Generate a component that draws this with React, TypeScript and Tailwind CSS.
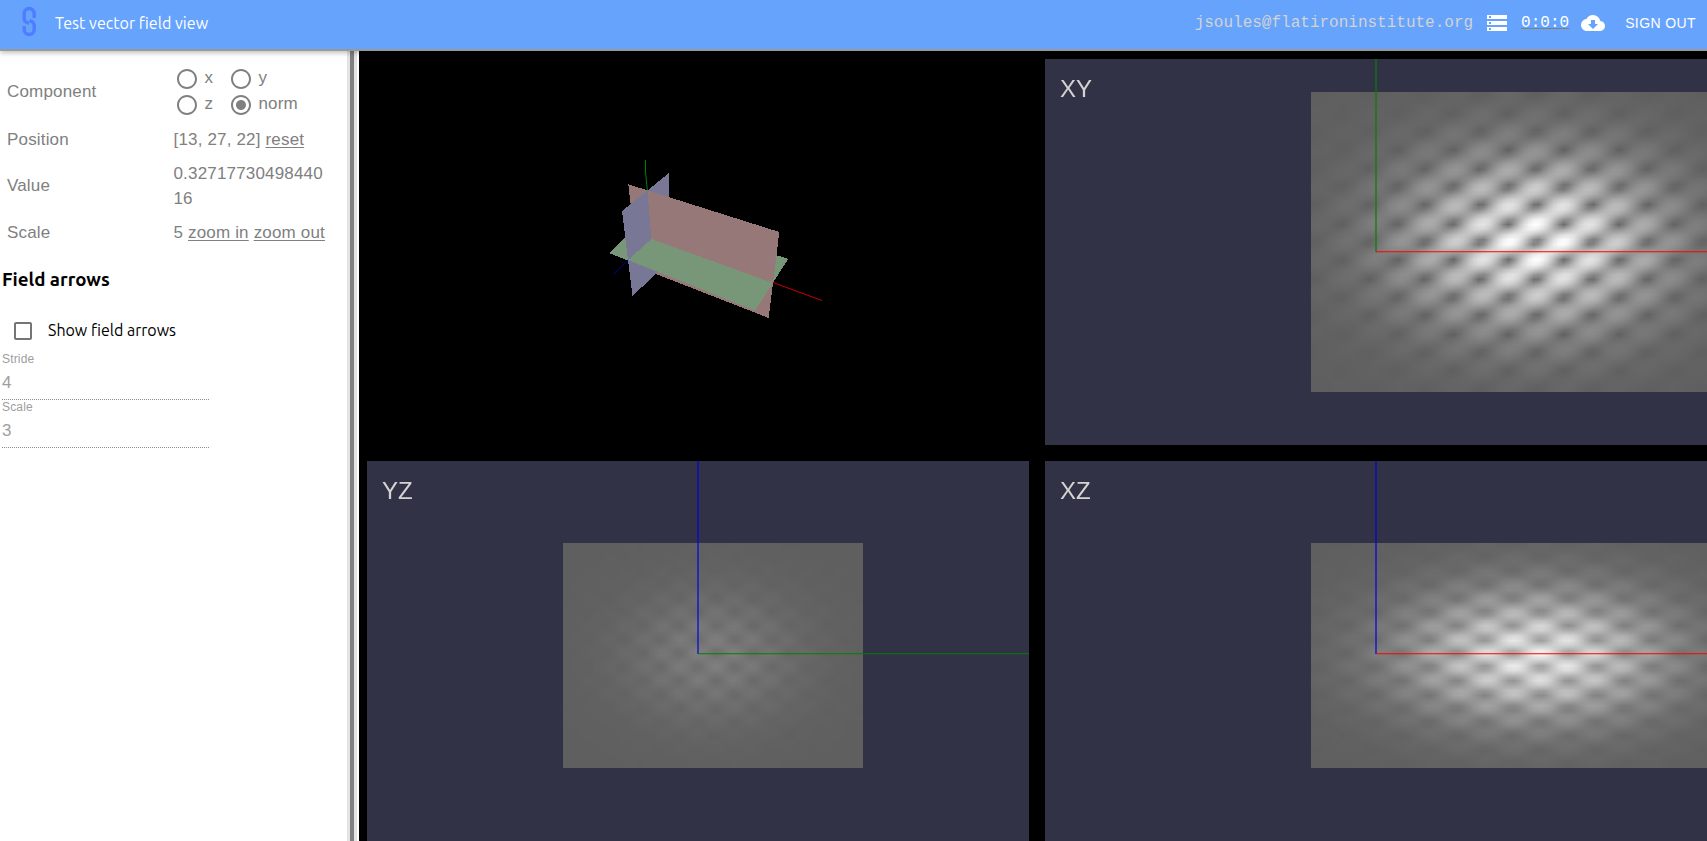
import React, { useLayoutEffect, useRef } from "react";
import { MdStorage, MdCloudDownload, MdRadioButtonUnchecked, MdRadioButtonChecked, MdCheckBoxOutlineBlank } from "react-icons/md";

type Axis = 0 | 1 | 2;
const SHAPE = [90, 60, 45];
const POSITION = [13, 27, 22];

function fieldNorm(p: number[]): number {
  const [x, y, z] = p.map((v, i) => (2 * v) / (SHAPE[i] - 1) - 1);
  const k = 4 * Math.PI;
  const g = Math.exp(-3 * (x * x + y * y + z * z));
  return g * Math.hypot(Math.sin(k * (x - y + z)), Math.sin(k * (x - y - z)), Math.sin(k * (x + y - z)));
}

function SliceImage({ h, v, className }: { h: Axis; v: Axis; className: string }) {
  const ref = useRef<HTMLCanvasElement>(null);
  useLayoutEffect(() => {
    const ctx = ref.current?.getContext("2d");
    if (!ctx) return;
    const [w, n] = [SHAPE[h], SHAPE[v]];
    const img = ctx.createImageData(w, n);
    for (let j = 0; j < n; j++) {
      for (let i = 0; i < w; i++) {
        const p = [...POSITION];
        p[h] = i;
        p[v] = n - 1 - j;
        const c = Math.min(255, 95 + 97 * fieldNorm(p));
        const o = (j * w + i) * 4;
        img.data[o] = c;
        img.data[o + 1] = c;
        img.data[o + 2] = c;
        img.data[o + 3] = 255;
      }
    }
    ctx.putImageData(img, 0, 0);
  }, [h, v]);
  return <canvas ref={ref} width={SHAPE[h]} height={SHAPE[v]} className={className} />;
}

const AXIS_COLORS = ["rgba(255,0,0,0.75)", "rgba(0,128,0,0.75)", "rgba(0,0,205,0.7)"];

function SlicePanel({ label, h, v, imageClass }: { label: string; h: Axis; v: Axis; imageClass: string }) {
  return (
    <div className="relative m-2 h-[386px] w-[662px] overflow-hidden bg-[#323246]">
      <SliceImage h={h} v={v} className={imageClass} />
      <svg className="absolute inset-0" width="662" height="386" shapeRendering="crispEdges">
        <rect x="330" y="0" width="2" height="193" fill={v === 1 ? "rgba(0,128,0,0.6)" : "rgba(0,0,220,0.6)"} />
        <rect x="331" y="192" width="331" height="1" fill={AXIS_COLORS[h]} />
        <rect x="331" y="193" width="331" height="1" fill={AXIS_COLORS[h]} opacity="0.3" />
      </svg>
      <div className="relative px-[15px] pt-[15px] text-[24px] leading-[30px] text-[#d3d3d3]">{label}</div>
    </div>
  );
}

function PlanesView() {
  return (
    <div className="h-[402px] w-[678px] overflow-hidden bg-black">
      <svg width="678" height="402" viewBox="359 51 678 402">
        <g shapeRendering="crispEdges">
          <polygon points="609,253 650,214 788.2,259 755,310.5" fill="#789678" />
          <polygon points="628.3,184.3 779.3,232 768.7,318 638,267" fill="#967878" />
          <polygon points="622,211 669,173 670.5,260 632.5,296" fill="#787896" />
          <polygon points="647.5,190.5 779.3,232 773,283 651.3,239" fill="#967878" />
          <polygon points="651.3,239 773,283 755,310.5 628,260" fill="#789678" />
        </g>
        <path d="M645.5 160v12l1.8 18" stroke="#008000" fill="none" />
        <path d="M628 260.5l-15 14" stroke="#0000a0" fill="none" />
        <path d="M773 282.500l49 18" stroke="#b00000" strokeWidth="1.3" fill="none" />
      </svg>
    </div>
  );
}

function Radio({ label, checked }: { label: string; checked?: boolean }) {
  return (
    <label className="flex h-[26px] items-center">
      {checked ? <MdRadioButtonChecked size={24} className="mt-px" /> : <MdRadioButtonUnchecked size={24} className="mt-px" />}
      <span className="-mt-[2px] ml-[6px]">{label}</span>
    </label>
  );
}

function Row({ label, className, children }: { label: string; className: string; children: React.ReactNode }) {
  return (
    <div className={"flex items-center " + className}>
      <div className="w-[166.5px] shrink-0">{label}</div>
      <div className="w-[152px] whitespace-nowrap">{children}</div>
    </div>
  );
}

function Field({ label, value }: { label: string; value: string }) {
  return (
    <div className="h-12 w-[207px] tracking-[0.16px] text-[#9e9e9e]">
      <div className="h-[17px] text-[12px] leading-[17px]">{label}</div>
      <div className="h-[32px] border-b border-dotted border-[#8c8c8c] text-[17px] leading-[29px]">{value}</div>
    </div>
  );
}

function Sidebar() {
  return (
    <aside className="h-full w-[347px] shrink-0 overflow-hidden bg-white">
      <div className="pl-[7px] pt-[14px] text-[17px] leading-[25px] tracking-[0.17px] text-[#808080]">
        <Row label="Component" className="h-[53px]">
          <div className="grid grid-cols-[54px_1fr] pl-[1px]">
            <Radio label="x" />
            <Radio label="y" />
            <Radio label="z" />
            <Radio label="norm" checked />
          </div>
        </Row>
        <Row label="Position" className="h-[43px]">
          [13, 27, 22] <span className="underline underline-offset-2">reset</span>
        </Row>
        <Row label="Value" className="h-[49px]">
          0.32717730498440
          <br />
          16
        </Row>
        <Row label="Scale" className="h-[44px]">
          5 <span className="underline underline-offset-2">zoom in</span> <span className="underline underline-offset-2">zoom out</span>
        </Row>
      </div>
      <h3 className="mt-[14px] pl-[2px] font-['Ubuntu','Noto_Sans',sans-serif] text-[18.72px] font-bold leading-[24px] text-black">Field arrows</h3>
      <div className="mt-[20px] flex h-[36px] items-center pl-[11px] font-['Ubuntu','Noto_Sans',sans-serif] text-[16px] text-black">
        <MdCheckBoxOutlineBlank size={24} className="mt-[2px] text-[#757575]" />
        <span className="ml-[13px]">Show field arrows</span>
      </div>
      <div className="pl-[2px] pt-[3px]">
        <Field label="Stride" value="4" />
        <Field label="Scale" value="3" />
      </div>
    </aside>
  );
}

export default function App() {
  return (
    <div className="flex h-[841px] w-[1707px] flex-col overflow-hidden bg-white font-['Liberation_Sans',Arial,sans-serif]">
      <header className="relative z-10 flex h-[51px] shrink-0 items-center border-b-2 border-[#999999] bg-[#65a3fd] pb-[3px] text-white shadow-[0_2px_5px_rgba(0,0,0,0.25)]">
        <svg className="ml-[21px] mt-[-3px]" width="16" height="32" viewBox="0 0 16 32" fill="none" stroke="#4f7dff" strokeWidth="3.4">
          <path d="M13.2 12V7.5A5 5 0 0 0 3.2 7.500V12.500Q3.200 16 8 17.500" />
          <path d="M3.200 20V23.500A5 5 0 0 0 13.200 23.500V19.500Q13.200 16 8.500 14.500" />
        </svg>
        <div className="ml-[18px] font-['Ubuntu','Noto_Sans',sans-serif] text-[16.1px]">Test vector field view</div>
        <div className="ml-auto flex items-center pr-[11px]">
          <span className="font-['Liberation_Mono',monospace] text-[16px] text-[#d3d3d3]">jsoules@flatironinstitute.org</span>
          <MdStorage size={24} className="ml-[12px]" />
          <span className="ml-[12px] font-['Liberation_Mono',monospace] text-[16px] underline decoration-[#808080] decoration-1 underline-offset-1">0:0:0</span>
          <MdCloudDownload size={24} className="ml-[12px]" />
          <span className="ml-[20px] text-[14px] tracking-[0.4px]">SIGN OUT</span>
        </div>
      </header>
      <div className="flex min-h-0 flex-1">
        <Sidebar />
        <div className="h-full w-[3px] shrink-0 bg-[#e3e3e3]" />
        <div className="h-full w-[4px] shrink-0 bg-[#808080]" />
        <div className="h-full w-[3px] shrink-0 bg-[#e3e3e3]" />
        <div className="h-full w-[2px] shrink-0 bg-white" />
        <main className="relative z-20 grid min-w-0 flex-1 grid-cols-[678px_678px] grid-rows-[402px_402px] overflow-hidden bg-black">
          <PlanesView />
          <SlicePanel label="XY" h={0} v={1} imageClass="absolute left-[266px] top-[33px] h-[300px] w-[450px] max-w-none" />
          <SlicePanel label="YZ" h={1} v={2} imageClass="absolute left-[196px] top-[82px] h-[225px] w-[300px] max-w-none" />
          <SlicePanel label="XZ" h={0} v={2} imageClass="absolute left-[266px] top-[82px] h-[225px] w-[450px] max-w-none" />
        </main>
      </div>
    </div>
  );
}
